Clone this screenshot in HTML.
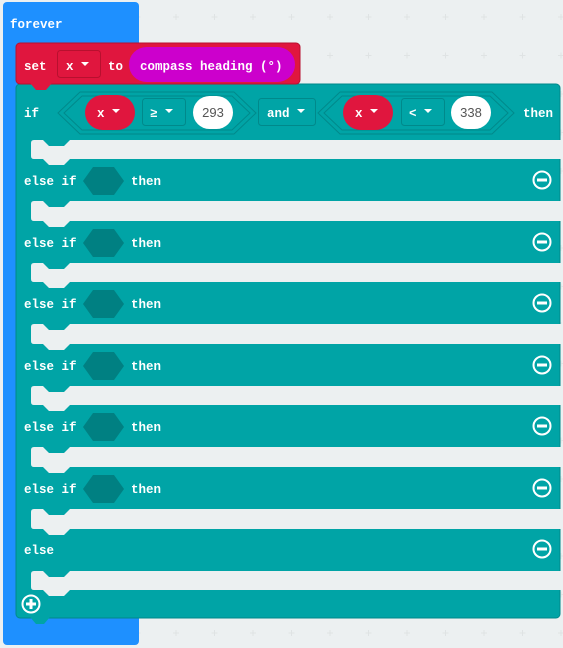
<!DOCTYPE html>
<html><head><meta charset="utf-8"><style>
html,body{margin:0;padding:0;background:#ecf0f1;width:563px;height:648px;overflow:hidden}
svg{display:block}
text{font-family:"Liberation Mono","DejaVu Sans Mono",monospace;font-weight:bold;font-size:12.5px;fill:#fff}
</style></head><body>
<svg width="563" height="648" viewBox="0 0 563 648" xmlns="http://www.w3.org/2000/svg">
<defs>
<pattern id="g" x="0" y="0" width="38.5" height="38.5" patternUnits="userSpaceOnUse" patternTransform="translate(157,-2)">
<path d="M19 16v6M16 19h6" stroke="#dfe3e4" stroke-width="1"/>
</pattern>
</defs>
<rect width="563" height="648" fill="#ecf0f1"/>
<rect width="563" height="648" fill="url(#g)"/>
<!-- forever -->
<rect x="3" y="2" width="136" height="643" rx="4" fill="#1e90ff"/>
<text x="10" y="28">forever</text>
<!-- teal body -->
<rect x="16" y="84" width="544" height="534" rx="4" fill="#00a4a6" stroke="#00898b" stroke-width="1"/>
<path d="M30 617h20l-6 7h-8z" fill="#00a4a6"/>
<!-- set block -->
<rect x="16" y="43" width="284" height="41" rx="4" fill="#e0163e" stroke="#b8102f"/>
<path d="M30 83h22l-6 7h-10z" fill="#e0163e"/>
<text x="24" y="70">set</text>
<rect x="57.5" y="50.5" width="43" height="27" rx="3" fill="#e0163e" stroke="#b8102f"/>
<text x="66" y="70">x</text><path d="M81 62h8l-4 4z" fill="#fff"/>
<text x="108" y="70">to</text>
<rect x="129" y="47" width="166" height="35" rx="17.5" fill="#cc00cc"/>
<text x="140" y="70">compass heading (°)</text>
<!-- gaps -->
<g fill="#ecf0f1">
<path d="M31 143q0-3 3-3H43l6 6h15l6-6H563V159H70l-6 6H49l-6-6H34q-3 0-3-3Z"/>
<path d="M31 204q0-3 3-3H43l6 6h15l6-6H563V221H70l-6 6H49l-6-6H34q-3 0-3-3Z"/>
<path d="M31 266q0-3 3-3H43l6 6h15l6-6H563V282H70l-6 6H49l-6-6H34q-3 0-3-3Z"/>
<path d="M31 327q0-3 3-3H43l6 6h15l6-6H563V344H70l-6 6H49l-6-6H34q-3 0-3-3Z"/>
<path d="M31 389q0-3 3-3H43l6 6h15l6-6H563V405H70l-6 6H49l-6-6H34q-3 0-3-3Z"/>
<path d="M31 450q0-3 3-3H43l6 6h15l6-6H563V467H70l-6 6H49l-6-6H34q-3 0-3-3Z"/>
<path d="M31 512q0-3 3-3H43l6 6h15l6-6H563V529H70l-6 6H49l-6-6H34q-3 0-3-3Z"/>
<path d="M31 574q0-3 3-3H43l6 6h15l6-6H563V590H70l-6 6H49l-6-6H34q-3 0-3-3Z"/>
</g>
<!-- if row -->
<text x="24" y="117">if</text>
<path d="M58 113l22-21h154l22 21-22 21H80z" fill="#00a4a6" stroke="#00898b"/>
<path d="M64 113l18-17h150l18 17-18 17H82z" fill="none" stroke="#00898b"/>
<rect x="85" y="95" width="50" height="35" rx="17.5" fill="#e0163e"/>
<text x="97" y="117">x</text><path d="M112 109h8l-4 4z" fill="#fff"/>
<rect x="142.5" y="98.5" width="43" height="27" rx="3" fill="#00a4a6" stroke="#00898b"/>
<text x="150" y="117">≥</text><path d="M165 109h8l-4 4z" fill="#fff"/>
<rect x="193" y="96" width="40" height="33" rx="16.5" fill="#fff"/>
<text x="213" y="117" text-anchor="middle" style="fill:#555;font-weight:normal;font-family:'Liberation Sans',sans-serif;font-size:13px">293</text>
<rect x="258.5" y="98.5" width="57" height="27" rx="3" fill="#00a4a6" stroke="#00898b"/>
<text x="267" y="117">and</text><path d="M297 109h8l-4 4z" fill="#fff"/>
<path d="M318 113l22-21h152l22 21-22 21H340z" fill="#00a4a6" stroke="#00898b"/>
<path d="M324 113l18-17h148l18 17-18 17H342z" fill="none" stroke="#00898b"/>
<rect x="343" y="95" width="50" height="35" rx="17.5" fill="#e0163e"/>
<text x="355" y="117">x</text><path d="M370 109h8l-4 4z" fill="#fff"/>
<rect x="401.5" y="98.5" width="43" height="27" rx="3" fill="#00a4a6" stroke="#00898b"/>
<text x="409" y="117">&lt;</text><path d="M424 109h8l-4 4z" fill="#fff"/>
<rect x="451" y="96" width="40" height="33" rx="16.5" fill="#fff"/>
<text x="471" y="117" text-anchor="middle" style="fill:#555;font-weight:normal;font-family:'Liberation Sans',sans-serif;font-size:13px">338</text>
<text x="523" y="117">then</text>
<!-- else if rows -->
<g id="ei">
<text x="24" y="185">else if</text>
<path d="M83 181l10-14h21l10 14-10 14H93z" fill="#008082"/>
<text x="131" y="185">then</text>
<circle cx="542" cy="180" r="8.5" fill="none" stroke="#fff" stroke-width="2"/>
<rect x="537" y="178.5" width="10" height="3" fill="#fff"/>
</g>
<use href="#ei" y="62"/>
<use href="#ei" y="123"/>
<use href="#ei" y="185"/>
<use href="#ei" y="246"/>
<use href="#ei" y="308"/>
<text x="24" y="554">else</text>
<circle cx="542" cy="549" r="8.5" fill="none" stroke="#fff" stroke-width="2"/>
<rect x="537" y="547.5" width="10" height="3" fill="#fff"/>
<circle cx="31" cy="604" r="8.5" fill="none" stroke="#fff" stroke-width="2"/>
<rect x="26" y="602.5" width="10" height="3" fill="#fff"/>
<rect x="29.5" y="599" width="3" height="10" fill="#fff"/>
</svg>
</body></html>
